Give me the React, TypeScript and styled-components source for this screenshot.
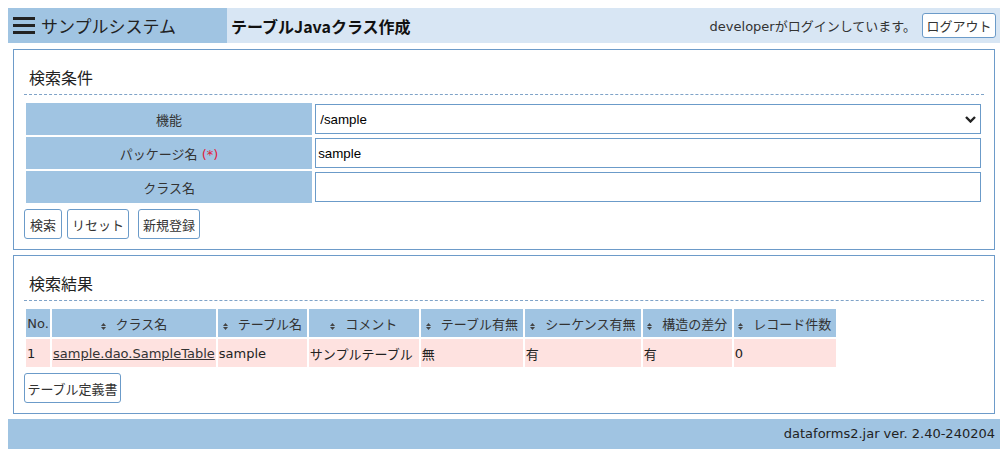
import styled, { createGlobalStyle } from "styled-components";

const GlobalStyle = createGlobalStyle`
  body {
    margin: 8px;
    background: #fff;
    color: #333;
    font-family: "DejaVu Sans", "Noto Sans CJK JP", sans-serif;
    font-size: 13px;
  }
  * {
    box-sizing: border-box;
  }
`;

const Header = styled.header`
  display: flex;
  align-items: center;
  height: 35px;
  background-color: #d8e6f4;
`;

const Brand = styled.div`
  display: flex;
  align-items: center;
  gap: 6px;
  width: 219px;
  height: 100%;
  padding-left: 5px;
  background-color: #a0c4e2;
  color: #222;
  font-family: "Noto Sans CJK JP", sans-serif;
  font-size: 17px;
`;

const PageTitle = styled.h1`
  flex: 1;
  margin: 0;
  padding-left: 4px;
  color: #111;
  font-family: "Noto Sans CJK JP", sans-serif;
  font-size: 16px;
  font-weight: 700;
`;

const UserInfo = styled.div`
  display: flex;
  align-items: center;
  gap: 6px;
  padding-right: 4px;
  color: #333;
  white-space: nowrap;
`;

const Button = styled.button<{ $w?: number; $h?: number }>`
  width: ${(p) => (p.$w ? `${p.$w}px` : "auto")};
  height: ${(p) => p.$h ?? 30}px;
  padding: 0;
  border: 1px solid #6b9bc9;
  border-radius: 3px;
  background: #fff;
  color: #333;
  font-family: "DejaVu Sans", "Noto Sans CJK JP", sans-serif;
  font-size: 13px;
  white-space: nowrap;
  cursor: pointer;
`;

const SpacedButton = styled(Button)`
  margin-left: 4px;
`;

const Main = styled.main`
  display: flex;
  flex-direction: column;
  gap: 5px;
  padding: 6px 5px 5px;
`;

const Panel = styled.section`
  padding: 10px;
  border: 1px solid #6d9bc9;
`;

const PanelTitle = styled.h2`
  margin: 0;
  padding: 5px;
  border-bottom: 1px dashed #7fa3c8;
  color: #222;
  font-family: "Noto Sans CJK JP", sans-serif;
  font-size: 16px;
  font-weight: 400;
  line-height: 24px;
`;

const FormTable = styled.table`
  width: 100%;
  margin-top: 6px;
  border-spacing: 2px;
`;

const LabelCell = styled.th`
  width: 30%;
  height: 32px;
  padding: 0;
  background-color: #a0c4e2;
  color: #333;
  font-size: 13px;
  font-weight: 400;
  text-align: center;
`;

const FieldCell = styled.td`
  padding: 1px;
`;

const Required = styled.span`
  color: #e0203c;
`;

const fieldBase = `
  display: block;
  width: 100%;
  height: 30px;
  border: 1px solid #6b9bc9;
  border-radius: 0;
  background: #fff;
  color: #000;
  font-family: "Liberation Sans", Arial, sans-serif;
  font-size: 13.33px;
  outline: none;
`;

const SelectWrap = styled.div`
  position: relative;
`;

const Select = styled.select`
  ${fieldBase}
  appearance: none;
  padding: 0 4px;
`;

const Chevron = styled.svg`
  position: absolute;
  right: 5px;
  top: 12px;
  pointer-events: none;
`;

const TextInput = styled.input`
  ${fieldBase}
  padding: 0 2px;
`;

const ButtonRow = styled.div`
  display: flex;
  gap: 5px;
  margin-top: 4px;
`;

const ResultTable = styled.table`
  margin-top: 6px;
  border-spacing: 2px;
`;

const HeadCell = styled.th<{ $w: number }>`
  width: ${(p) => p.$w}px;
  height: 28px;
  padding: 0 1px;
  background-color: #a0c4e2;
  color: #333;
  font-size: 13px;
  font-weight: 400;
  text-align: center;
  white-space: nowrap;
`;

const SortIcon = styled.svg`
  margin-right: 10px;
  vertical-align: -1px;
`;

const DataCell = styled.td`
  height: 28px;
  padding: 0 1px;
  background-color: #fee2e0;
  color: #222;
  white-space: nowrap;
`;

const ClassLink = styled.a`
  color: #333;
  text-decoration: underline;
`;

const ResultActions = styled.div`
  margin-top: 4px;
`;

const Footer = styled.footer`
  height: 30px;
  padding-right: 5px;
  background-color: #a0c4e2;
  color: #222;
  line-height: 30px;
  text-align: right;
`;

const Hamburger = () => (
  <svg width="22" height="17" viewBox="0 0 22 17">
    <rect x="0" y="0" width="22" height="3" fill="#222" />
    <rect x="0" y="7" width="22" height="3" fill="#222" />
    <rect x="0" y="14" width="22" height="3" fill="#222" />
  </svg>
);

const Sort = () => (
  <SortIcon width="5" height="7" viewBox="0 0 5 7">
    <polygon points="0,3 2.5,0 5,3" fill="#444" />
    <polygon points="0,4 5,4 2.5,7" fill="#444" />
  </SortIcon>
);

const columns = [
  { label: "No.", w: 24, sort: false },
  { label: "クラス名", w: 163, sort: true },
  { label: "テーブル名", w: 89, sort: true },
  { label: "コメント", w: 110, sort: true },
  { label: "テーブル有無", w: 102, sort: true },
  { label: "シーケンス有無", w: 116, sort: true },
  { label: "構造の差分", w: 89, sort: true },
  { label: "レコード件数", w: 102, sort: true },
];

export default function App() {
  return (
    <>
      <GlobalStyle />
      <Header>
        <Brand>
          <Hamburger />
          サンプルシステム
        </Brand>
        <PageTitle>テーブルJavaクラス作成</PageTitle>
        <UserInfo>
          developerがログインしています。
          <Button $w={74} $h={25}>ログアウト</Button>
        </UserInfo>
      </Header>

      <Main>
        <Panel>
          <PanelTitle>検索条件</PanelTitle>
          <FormTable>
            <tbody>
              <tr>
                <LabelCell>機能</LabelCell>
                <FieldCell>
                  <SelectWrap>
                    <Select defaultValue="/sample">
                      <option value="/sample">/sample</option>
                    </Select>
                    <Chevron width="11" height="7" viewBox="0 0 11 7">
                      <polyline
                        points="1,1 5.5,5.5 10,1"
                        fill="none"
                        stroke="#222"
                        strokeWidth="2.4"
                      />
                    </Chevron>
                  </SelectWrap>
                </FieldCell>
              </tr>
              <tr>
                <LabelCell>
                  パッケージ名 <Required>(*)</Required>
                </LabelCell>
                <FieldCell>
                  <TextInput defaultValue="sample" />
                </FieldCell>
              </tr>
              <tr>
                <LabelCell>クラス名</LabelCell>
                <FieldCell>
                  <TextInput defaultValue="" />
                </FieldCell>
              </tr>
            </tbody>
          </FormTable>
          <ButtonRow>
            <Button $w={38}>検索</Button>
            <Button $w={62}>リセット</Button>
            <SpacedButton $w={62}>新規登録</SpacedButton>
          </ButtonRow>
        </Panel>

        <Panel>
          <PanelTitle>検索結果</PanelTitle>
          <ResultTable>
            <thead>
              <tr>
                {columns.map((c) => (
                  <HeadCell key={c.label} $w={c.w}>
                    {c.sort && <Sort />}
                    {c.label}
                  </HeadCell>
                ))}
              </tr>
            </thead>
            <tbody>
              <tr>
                <DataCell>1</DataCell>
                <DataCell>
                  <ClassLink href="#">sample.dao.SampleTable</ClassLink>
                </DataCell>
                <DataCell>sample</DataCell>
                <DataCell>サンプルテーブル</DataCell>
                <DataCell>無</DataCell>
                <DataCell>有</DataCell>
                <DataCell>有</DataCell>
                <DataCell>0</DataCell>
              </tr>
            </tbody>
          </ResultTable>
          <ResultActions>
            <Button $w={97}>テーブル定義書</Button>
          </ResultActions>
        </Panel>
      </Main>

      <Footer>dataforms2.jar ver. 2.40-240204</Footer>
    </>
  );
}
